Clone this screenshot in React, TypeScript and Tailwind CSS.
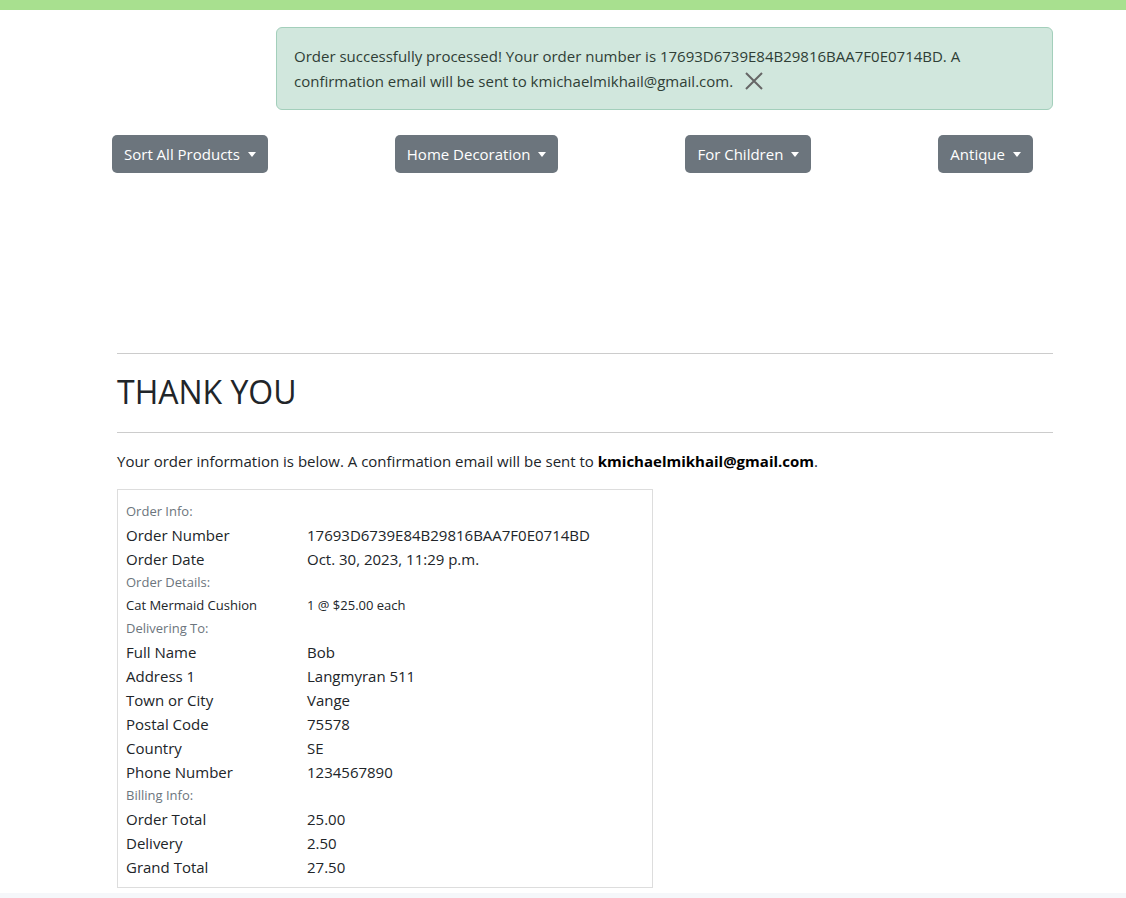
import React from "react";

const font = { fontFamily: '"Open Sans", "Noto Sans", sans-serif' };

function Caret() {
  return (
    <span className="ml-[8px] inline-block h-0 w-0 border-x-[4px] border-t-[5px] border-x-transparent border-t-white align-middle" />
  );
}

function DropBtn({ label }: { label: string }) {
  return (
    <button className="flex h-[38px] items-center rounded-[5px] bg-[#6c757d] px-3 text-[15px] text-white">
      {label}
      <Caret />
    </button>
  );
}

type Row = { kind: "head"; text: string } | { kind: "row"; label: string; value: string; small?: boolean };

const rows: Row[] = [
  { kind: "head", text: "Order Info:" },
  { kind: "row", label: "Order Number", value: "17693D6739E84B29816BAA7F0E0714BD" },
  { kind: "row", label: "Order Date", value: "Oct. 30, 2023, 11:29 p.m." },
  { kind: "head", text: "Order Details:" },
  { kind: "row", label: "Cat Mermaid Cushion", value: "1 @ $25.00 each", small: true },
  { kind: "head", text: "Delivering To:" },
  { kind: "row", label: "Full Name", value: "Bob" },
  { kind: "row", label: "Address 1", value: "Langmyran 511" },
  { kind: "row", label: "Town or City", value: "Vange" },
  { kind: "row", label: "Postal Code", value: "75578" },
  { kind: "row", label: "Country", value: "SE" },
  { kind: "row", label: "Phone Number", value: "1234567890" },
  { kind: "head", text: "Billing Info:" },
  { kind: "row", label: "Order Total", value: "25.00" },
  { kind: "row", label: "Delivery", value: "2.50" },
  { kind: "row", label: "Grand Total", value: "27.50" },
];

export default function App() {
  return (
    <div className="min-h-[898px] bg-white text-[#212529]" style={font}>
      <div className="h-[10px] bg-[#a8e08f]" />
      <div className="flex flex-col">
        <div className="ml-[276px] mt-[17px] w-[777px] rounded-[6px] border border-[#a3cfbb] bg-[#d1e7dd] px-[17px] pb-[15px] pt-[16px] text-[15px] text-[#2f3e36]">
          <div className="h-[24px] leading-[24px]">
            Order successfully processed! Your order number is 17693D6739E84B29816BAA7F0E0714BD. A
          </div>
          <div className="flex h-[26px] items-center leading-[26px]">
            confirmation email will be sent to kmichaelmikhail@gmail.com.
            <svg className="ml-[11px]" width="20" height="20" viewBox="0 0 20 20">
              <path d="M2 2 L18 18 M18 2 L2 18" stroke="#666" strokeWidth="2" />
            </svg>
          </div>
        </div>

        <div className="ml-[112px] mt-[25px] flex w-[921px] justify-between">
          <DropBtn label="Sort All Products" />
          <DropBtn label="Home Decoration" />
          <DropBtn label="For Children" />
          <DropBtn label="Antique" />
        </div>

        <div className="ml-[117px] mt-[180px] w-[936px]">
          <div className="h-px bg-[#cccccc]" />
          <h1 className="pb-[17px] pt-[14px] text-[32px] leading-[47px] text-[#212529]">THANK YOU</h1>
          <div className="h-px bg-[#cccccc]" />
          <p className="mt-[16px] text-[15px] leading-[24px]">
            Your order information is below. A confirmation email will be sent to{" "}
            <strong className="font-bold text-black">kmichaelmikhail@gmail.com</strong>.
          </p>
          <div className="mt-[16px] w-[536px] border border-[#dddddd] px-[8px] pb-[8px] pt-[10px]">
            {rows.map((r, i) =>
              r.kind === "head" ? (
                <div key={i} className="h-[23px] text-[13px] leading-[23px] text-[#6c757d]">
                  {r.text}
                </div>
              ) : (
                <div key={i} className={`flex ${r.small ? "h-[23px] text-[13px] leading-[23px]" : "h-[24px] text-[15px] leading-[24px]"}`}>
                  <div className="w-[181px]">{r.label}</div>
                  <div>{r.value}</div>
                </div>
              )
            )}
          </div>
        </div>
      </div>
      <div className="mt-[5px] h-[20px] bg-[#f5f7fa]" />
    </div>
  );
}
